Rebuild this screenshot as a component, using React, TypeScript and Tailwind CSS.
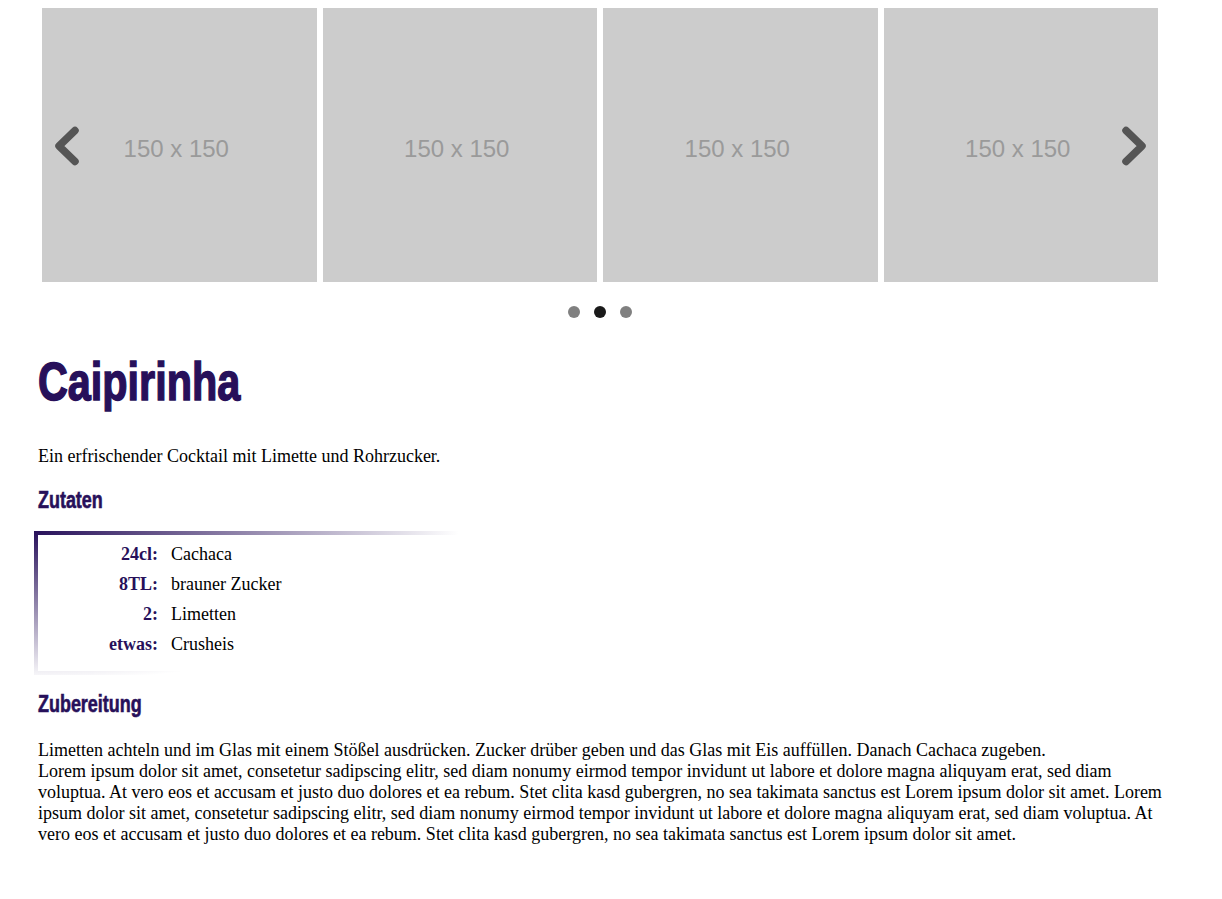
import * as React from "react"

const slides = [1, 2, 3, 4]

const ingredients = [
  { amount: "24cl:", name: "Cachaca" },
  { amount: "8TL:", name: "brauner Zucker" },
  { amount: "2:", name: "Limetten" },
  { amount: "etwas:", name: "Crusheis" },
]

function Chevron({ dir }: { dir: "left" | "right" }) {
  return (
    <svg width="28" height="40" viewBox="0 0 28 40" className="block">
      <polyline
        points={dir === "left" ? "22,4.5 6,20 22,35.5" : "6,4.5 22,20 6,35.5"}
        fill="none"
        stroke="#555555"
        strokeWidth="7.5"
        strokeLinecap="round"
        strokeLinejoin="round"
      />
    </svg>
  )
}

function Carousel() {
  return (
    <div className="ml-[4px] w-[1116px] pt-[8px]">
      <div className="relative">
        <div className="grid grid-cols-4 gap-[6px]">
          {slides.map((s) => (
            <div
              key={s}
              className="flex h-[274px] items-center justify-center bg-[#cccccc] pr-[6px] pt-[6px] font-['Liberation_Sans',Arial,sans-serif] text-[24px] text-[#9a9a9a]"
            >
              150 x 150
            </div>
          ))}
        </div>
        <button className="absolute left-[11px] top-[118px]" aria-label="zurück">
          <Chevron dir="left" />
        </button>
        <button className="absolute right-[10px] top-[118px]" aria-label="weiter">
          <Chevron dir="right" />
        </button>
      </div>
      <div className="mt-[24px] flex justify-center gap-[14px]">
        <span className="h-[12px] w-[12px] rounded-full bg-[#808080]" />
        <span className="h-[12px] w-[12px] rounded-full bg-[#1a1a1a]" />
        <span className="h-[12px] w-[12px] rounded-full bg-[#808080]" />
      </div>
    </div>
  )
}

// Impact is not installed: squeeze a bold sans to get the same narrow, heavy look
const heading =
  "inline-block origin-left scale-x-[0.78] whitespace-nowrap font-['Impact','Liberation_Sans',Arial,sans-serif] font-bold text-[#27105a]"

export default function App() {
  return (
    <div className="min-h-screen bg-white font-['Liberation_Serif','Times_New_Roman',serif] text-[18px] leading-[21px] text-black">
      <div className="w-[1166px] pb-[40px] pl-[38px]">
        <Carousel />

        <h1 className="mt-[34px] text-[53px] leading-[60px]">
          <span className={`${heading} [-webkit-text-stroke:1.5px_#27105a]`}>Caipirinha</span>
        </h1>

        <p className="mt-[34px]">Ein erfrischender Cocktail mit Limette und Rohrzucker.</p>

        <h2 className="mt-[19px] text-[23px] leading-[28px]">
          <span className={`${heading} [-webkit-text-stroke:0.6px_#27105a]`}>Zutaten</span>
        </h2>

        <div className="-ml-[4px] mt-[16px] bg-[radial-gradient(ellipse_425px_150px_at_top_left,#27105a,transparent)] pb-[4px] pl-[4px] pt-[4px]">
          <div className="bg-white pb-[12px] pt-[4px]">
            {ingredients.map((i) => (
              <div key={i.amount} className="flex h-[30px] items-center">
                <span className="w-[120px] text-right font-bold text-[#27105a]">{i.amount}</span>
                <span className="ml-[13px]">{i.name}</span>
              </div>
            ))}
          </div>
        </div>

        <h2 className="mt-[15px] text-[23px] leading-[28px]">
          <span className={`${heading} [-webkit-text-stroke:0.6px_#27105a]`}>Zubereitung</span>
        </h2>

        <p className="mt-[21px]">
          Limetten achteln und im Glas mit einem Stößel ausdrücken. Zucker drüber geben und das Glas mit Eis
          auffüllen. Danach Cachaca zugeben.
          <br />
          Lorem ipsum dolor sit amet, consetetur sadipscing elitr, sed diam nonumy eirmod tempor invidunt ut labore
          et dolore magna aliquyam erat, sed diam voluptua. At vero eos et accusam et justo duo dolores et ea
          rebum. Stet clita kasd gubergren, no sea takimata sanctus est Lorem ipsum dolor sit amet. Lorem ipsum
          dolor sit amet, consetetur sadipscing elitr, sed diam nonumy eirmod tempor invidunt ut labore et dolore
          magna aliquyam erat, sed diam voluptua. At vero eos et accusam et justo duo dolores et ea rebum. Stet
          clita kasd gubergren, no sea takimata sanctus est Lorem ipsum dolor sit amet.
        </p>
      </div>
    </div>
  )
}
